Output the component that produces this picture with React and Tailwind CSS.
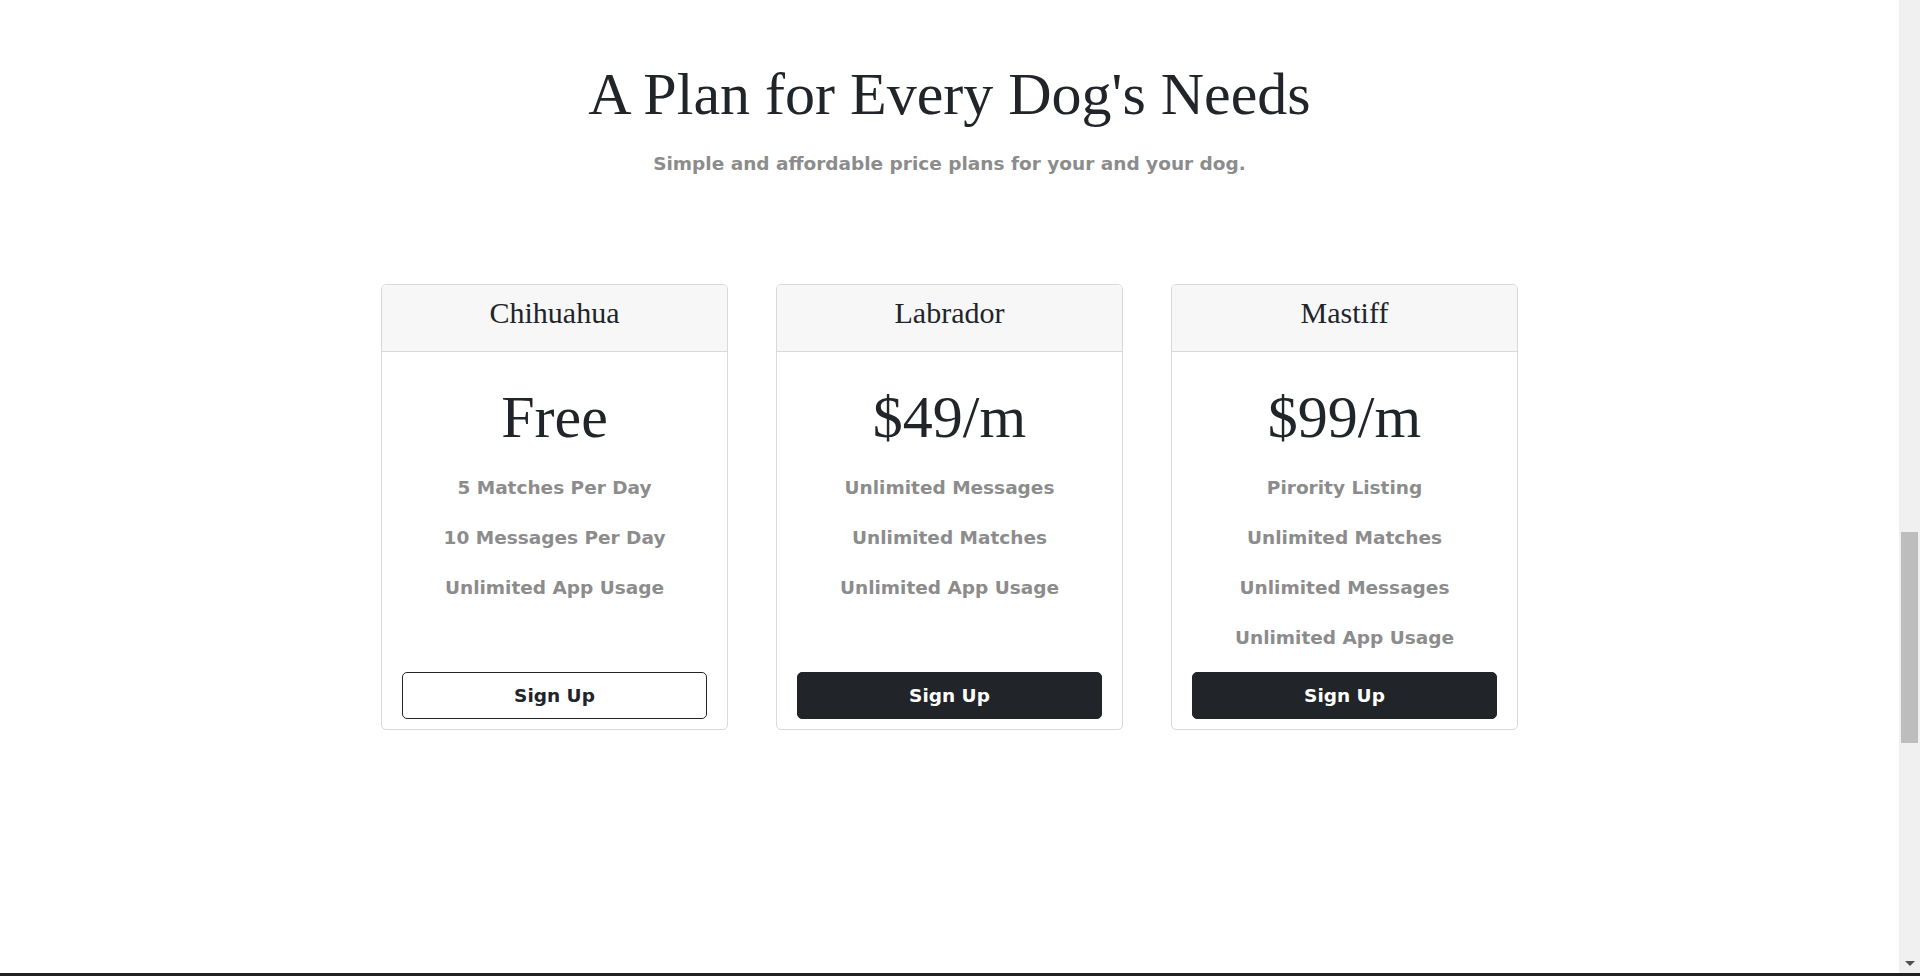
import React from "react";

const plans = [
  {
    name: "Chihuahua",
    price: "Free",
    features: ["5 Matches Per Day", "10 Messages Per Day", "Unlimited App Usage"],
    outline: true,
  },
  {
    name: "Labrador",
    price: "$49/m",
    features: ["Unlimited Messages", "Unlimited Matches", "Unlimited App Usage"],
    outline: false,
  },
  {
    name: "Mastiff",
    price: "$99/m",
    features: ["Pirority Listing", "Unlimited Matches", "Unlimited Messages", "Unlimited App Usage"],
    outline: false,
  },
];

function Card({ plan }) {
  return (
    <div className="flex flex-col border border-[#d9d9d9] rounded-[5px] overflow-hidden bg-white">
      <div className="h-[67px] bg-[#f7f7f7] border-b border-[#d9d9d9] pt-[10px] text-center">
        <h4 className="font-['Liberation_Serif',serif] text-[30px] leading-[36px] font-normal text-[#212529]">
          {plan.name}
        </h4>
      </div>
      <div className="flex flex-1 flex-col items-center pt-[29px] pb-[10px] px-[20px]">
        <div className="font-['Liberation_Serif',serif] text-[60px] leading-[72px] text-[#212529]">
          {plan.price}
        </div>
        <ul className="mt-[23px] mb-[22px] flex flex-col gap-[26px] text-center">
          {plan.features.map((f) => (
            <li key={f} className="text-[18.5px] leading-[24px] font-bold text-[#8c8c8c]">
              {f}
            </li>
          ))}
        </ul>
        <button
          className={
            plan.outline
              ? "mt-auto w-full h-[47px] rounded-[5px] border border-[#212529] bg-white text-[#212529] text-[18.5px] font-bold"
              : "mt-auto w-full h-[47px] rounded-[5px] border border-[#212529] bg-[#212529] text-white text-[18.5px] font-bold"
          }
        >
          Sign Up
        </button>
      </div>
    </div>
  );
}

export default function App() {
  return (
    <div className="h-[976px] w-full flex flex-col bg-white font-['DejaVu_Sans',sans-serif] overflow-hidden">
      <div className="flex flex-1 min-h-0">
        <main className="flex-1 flex flex-col items-center">
          <h1 className="mt-[58px] font-['Liberation_Serif',serif] text-[60px] leading-[72px] font-normal text-[#212529]">
            A Plan for Every Dog's Needs
          </h1>
          <p className="mt-[22px] text-[18.5px] leading-[24px] font-bold text-[#8c8c8c]">
            Simple and affordable price plans for your and your dog.
          </p>
          <div className="mt-[108px] grid grid-cols-3 gap-[48px] w-[1137px] items-stretch">
            {plans.map((p) => (
              <Card key={p.name} plan={p} />
            ))}
          </div>
        </main>
        <div className="w-[21px] bg-[#f0f0f0] flex flex-col items-center">
          <div className="mt-[532px] h-[211px] w-[17px] bg-[#bdbdbd]" />
          <div className="mt-auto mb-[6px]">
            <svg width="10" height="6" viewBox="0 0 10 6">
              <path d="M0 0 L10 0 L5 5 Z" fill="#505050" />
            </svg>
          </div>
        </div>
      </div>
      <div className="h-[3px] bg-[#202020]" />
    </div>
  );
}
